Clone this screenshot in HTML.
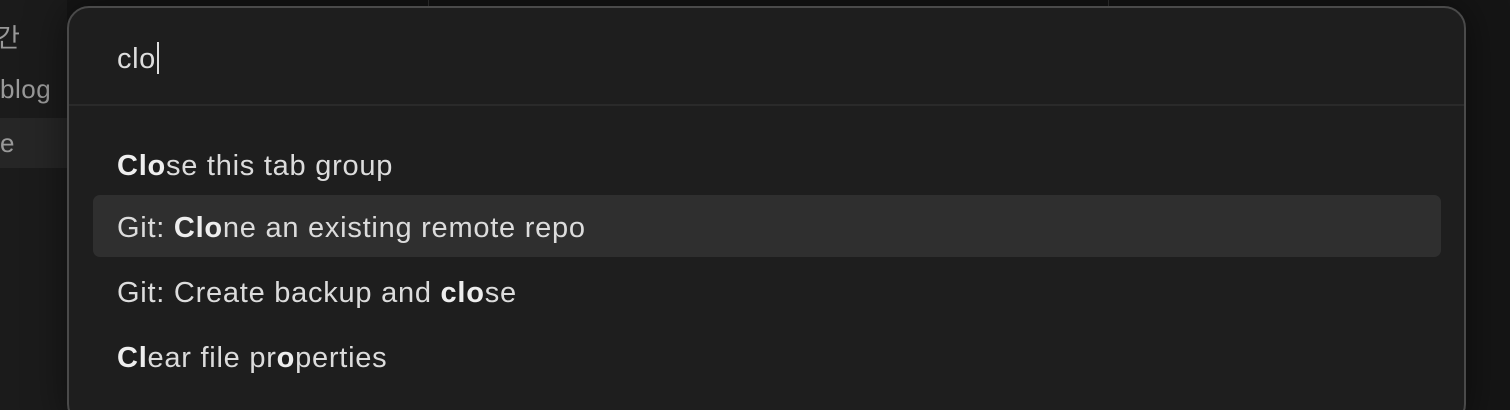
<!DOCTYPE html><html style="height:410px;overflow:hidden"><head><style>
body{margin:0;width:1510px;height:410px;background:#151515;overflow:hidden;position:relative;font-family:"Liberation Sans","Noto Sans CJK KR",sans-serif;}
.side{position:absolute;left:0;top:0;width:67px;height:410px;background:#1b1b1b;}
.sel{position:absolute;left:0;top:118px;width:67px;height:50px;background:#262626;}
.st{position:absolute;color:#999;font-size:26px;letter-spacing:.5px;}
.vl{position:absolute;top:0;width:1px;height:8px;background:#333;}
.modal{position:absolute;left:67px;top:6px;width:1399px;height:420px;background:#1e1e1e;border:2px solid #4a4a4a;border-radius:22px;box-sizing:border-box;box-shadow:0 0 40px rgba(0,0,0,.5);}
.inp{position:absolute;left:48px;top:34px;color:#ddd;font-size:29px;letter-spacing:.6px;}
.cur{display:inline-block;width:2px;height:32px;background:#ddd;vertical-align:-6px;margin-left:1px;}
.sep{position:absolute;left:0;right:0;top:96px;height:2px;background:#2a2a2a;}
.row{position:absolute;left:24px;width:1348px;height:62px;border-radius:7px;color:#dcdcdc;font-size:29px;letter-spacing:.75px;line-height:66px;padding-left:24px;box-sizing:border-box;}
.row b{color:#eee;}
.hl{background:#2f2f2f;}
</style></head><body>
<div class="side"></div><div class="sel"></div>
<div class="st" style="left:-4px;top:18px">간</div>
<div class="st" style="left:0;top:74px">blog</div>
<div class="st" style="left:0;top:128px">e</div>
<div class="vl" style="left:428px"></div><div class="vl" style="left:1108px"></div>
<div class="modal">
<div class="inp">clo<span class="cur"></span></div>
<div class="sep"></div>
<div class="row" style="top:125px"><b>Clo</b>se this tab group</div>
<div class="row hl" style="top:187px">Git: <b>Clo</b>ne an existing remote repo</div>
<div class="row" style="top:252px">Git: Create backup and <b>clo</b>se</div>
<div class="row" style="top:317px"><b>Cl</b>ear file pr<b>o</b>perties</div>
</div>
</body></html>
